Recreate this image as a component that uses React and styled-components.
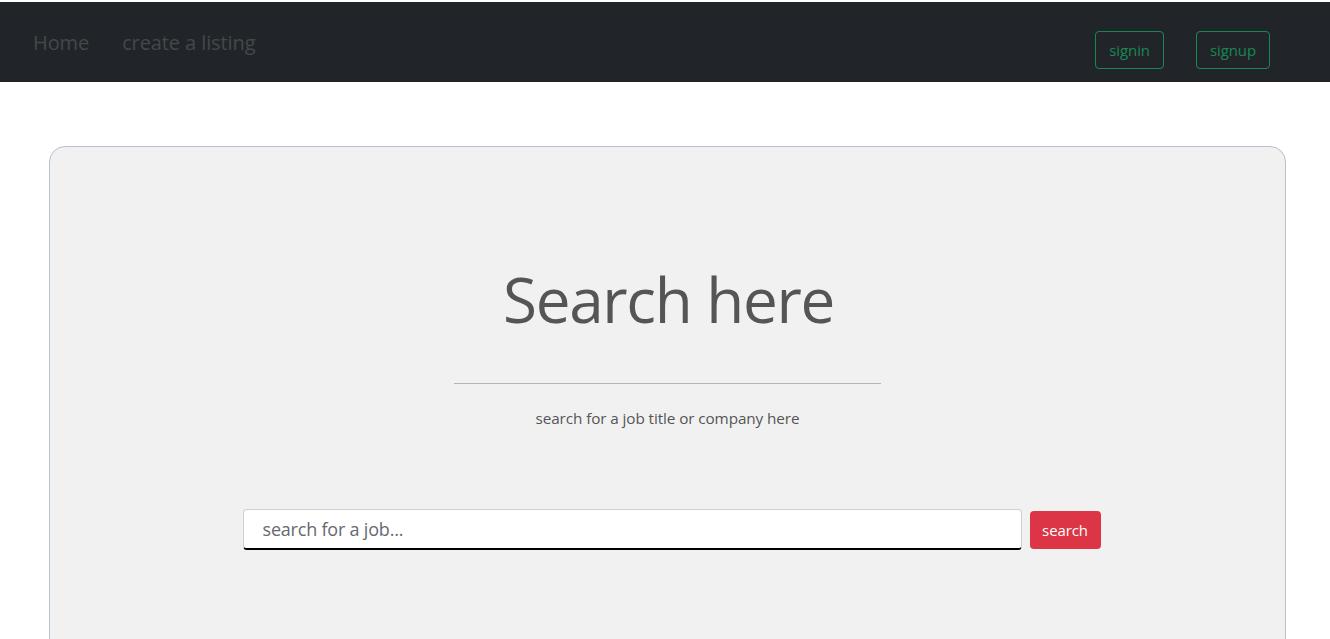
import React from 'react';
import styled, { createGlobalStyle } from 'styled-components';

const GlobalStyle = createGlobalStyle`
  html, body {
    margin: 0;
    padding: 0;
    background: #ffffff;
    font-family: "Open Sans", "Noto Sans", sans-serif;
    overflow: hidden;
  }
  * { box-sizing: border-box; }
`;

const Page = styled.div`
  padding-top: 2px;
  height: 639px;
`;

const Navbar = styled.nav`
  height: 80px;
  background: #212529;
  display: flex;
  align-items: flex-start;
  justify-content: space-between;
  padding: 0 60px 0 33px;
`;

const NavLinks = styled.div`
  display: flex;
  gap: 33px;
  padding-top: 27px;
`;

const NavLink = styled.a`
  color: #44474b;
  font-size: 20px;
  text-decoration: none;
  letter-spacing: -0.1px;
`;

const NavButtons = styled.div`
  display: flex;
  gap: 32px;
  padding-top: 29px;
`;

const OutlineButton = styled.button`
  height: 38px;
  padding: 0 13px;
  border: 1px solid #198754;
  border-radius: 4px;
  background: transparent;
  color: #198754;
  font-family: inherit;
  font-size: 15px;
  letter-spacing: -0.1px;
`;

const Main = styled.main`
  padding: 64px 44px 0 49px;
`;

const Card = styled.section`
  height: 520px;
  background: #f1f1f1;
  border: 1px solid #b6c2cf;
  border-radius: 16px;
  display: flex;
  flex-direction: column;
  align-items: center;
  padding-top: 108px;
`;

const Title = styled.h1`
  margin: 0;
  font-size: 62px;
  font-weight: 400;
  color: #555555;
  line-height: 88px;
  letter-spacing: -1.3px;
  padding-left: 2px;
`;

const Divider = styled.hr`
  width: 427px;
  margin: 40px 0 0;
  border: 0;
  border-top: 1px solid #aeb6bf;
`;

const Subtitle = styled.p`
  margin: 24px 0 0;
  font-size: 15.3px;
  line-height: 21px;
  color: #555555;
  letter-spacing: -0.1px;
`;

const SearchRow = styled.form`
  display: flex;
  align-items: center;
  gap: 8px;
  margin-top: 80px;
  margin-left: 8px;
`;

const SearchInput = styled.input`
  width: 779px;
  height: 41px;
  padding: 0 19px;
  background: #ffffff;
  border: 1px solid #d0d0d0;
  border-bottom: 2px solid #000000;
  border-radius: 4px;
  font-family: inherit;
  font-size: 18px;
  color: #333;
  outline: none;
  &::placeholder {
    color: #666a70;
    letter-spacing: -0.2px;
  }
`;

const SearchButton = styled.button`
  height: 38px;
  width: 71px;
  padding: 0;
  background: #dc3545;
  border: none;
  border-radius: 4px;
  color: #ffffff;
  font-family: inherit;
  font-size: 15px;
  letter-spacing: -0.1px;
`;

export default function App() {
  return (
    <Page>
      <GlobalStyle />
      <Navbar>
        <NavLinks>
          <NavLink href="#">Home</NavLink>
          <NavLink href="#">create a listing</NavLink>
        </NavLinks>
        <NavButtons>
          <OutlineButton>signin</OutlineButton>
          <OutlineButton>signup</OutlineButton>
        </NavButtons>
      </Navbar>
      <Main>
        <Card>
          <Title>Search here</Title>
          <Divider />
          <Subtitle>search for a job title or company here</Subtitle>
          <SearchRow onSubmit={(e) => e.preventDefault()}>
            <SearchInput type="text" placeholder="search for a job..." />
            <SearchButton type="submit">search</SearchButton>
          </SearchRow>
        </Card>
      </Main>
    </Page>
  );
}
